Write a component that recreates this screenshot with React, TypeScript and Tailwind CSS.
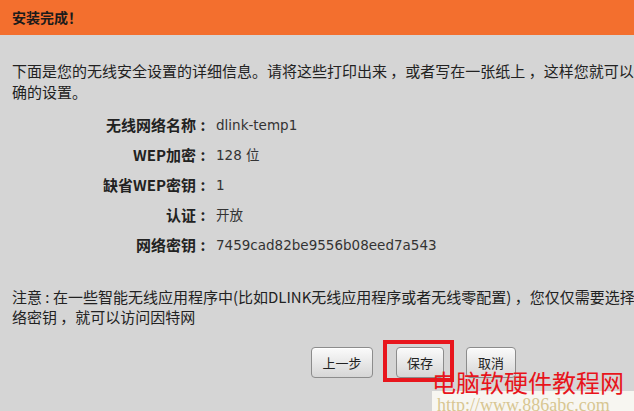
import React from "react";

const CJK = "font-['Noto_Sans_CJK_SC',sans-serif]";

const ROWS = [
  { label: "无线网络名称", value: "dlink-temp1" },
  { label: "WEP加密", value: "128 位" },
  { label: "缺省WEP密钥", value: "1" },
  { label: "认证", value: "开放" },
  { label: "网络密钥", value: "7459cad82be9556b08eed7a543" },
];

function Btn({ w, children }: { w: string; children: React.ReactNode }) {
  return (
    <button
      className={`${w} h-[31px] rounded-[4px] border border-[#8c8c8c] bg-gradient-to-b from-[#fbfbfb] to-[#d6d6d6] text-[13px] text-[#222] shadow-[inset_0_1px_0_#fff]`}
    >
      {children}
    </button>
  );
}

export default function App() {
  return (
    <div className={`relative w-[634px] h-[411px] overflow-hidden bg-[#d5d5d5] ${CJK}`}>
      {/* header */}
      <div className="h-[35px] bg-[#f36f2e] pl-3 flex items-center">
        <h1 className="text-[14px] font-bold text-[#1b1b1b]">安装完成！</h1>
      </div>

      <div className="pl-3 pt-[25px] text-[15px] text-[#222] leading-[21px] whitespace-nowrap">
        <p>下面是您的无线安全设置的详细信息。请将这些打印出来 ，或者写在一张纸上 ，这样您就可以正</p>
        <p>确的设置。</p>
      </div>

      {/* info rows */}
      <div className="mt-[8px] grid grid-cols-[196px_14px_1fr] text-[15px] text-[#222]">
        {ROWS.map((r) => (
          <React.Fragment key={r.label}>
            <div className="h-[30px] flex items-center justify-end font-bold">{r.label}</div>
            <div className="h-[30px] flex items-center justify-center font-bold">:</div>
            <div className="h-[30px] flex items-center pl-[6px] font-['DejaVu_Sans','Noto_Sans_CJK_SC',sans-serif] text-[13.5px] text-[#333]">
              {r.value}
            </div>
          </React.Fragment>
        ))}
      </div>

      <div className="pl-3 mt-[27px] text-[15px] text-[#222] leading-[20px] whitespace-nowrap">
        <p>注意 : 在一些智能无线应用程序中(比如DLINK无线应用程序或者无线零配置) ，您仅仅需要选择网</p>
        <p>络密钥 ，就可以访问因特网</p>
      </div>

      {/* buttons */}
      <div className="mt-[20px] ml-[311px] flex items-center">
        <Btn w="w-[62px]">上一步</Btn>
        <div className="relative ml-[23px]">
          <Btn w="w-[48px]">保存</Btn>
          <span className="absolute -left-[13px] -right-[10px] -top-[7px] -bottom-[4px] border-[4px] border-[#e8161d]" />
        </div>
        <div className="ml-[22px]">
          <Btn w="w-[50px]">取消</Btn>
        </div>
      </div>

      {/* watermark */}
      <div className="absolute left-[432px] top-[391px] right-0 bottom-0 bg-[#f7f6f1] pl-[5px] pt-[1px]">
        <span className="font-['Liberation_Serif',serif] text-[18px] leading-[20px] text-[#d8c692]">
          http://www.886abc.com
        </span>
      </div>
      <div className="absolute left-[432px] top-[370px] text-[24px] leading-[24px] text-[#e8141b]">
        电脑软硬件教程网
      </div>
    </div>
  );
}
